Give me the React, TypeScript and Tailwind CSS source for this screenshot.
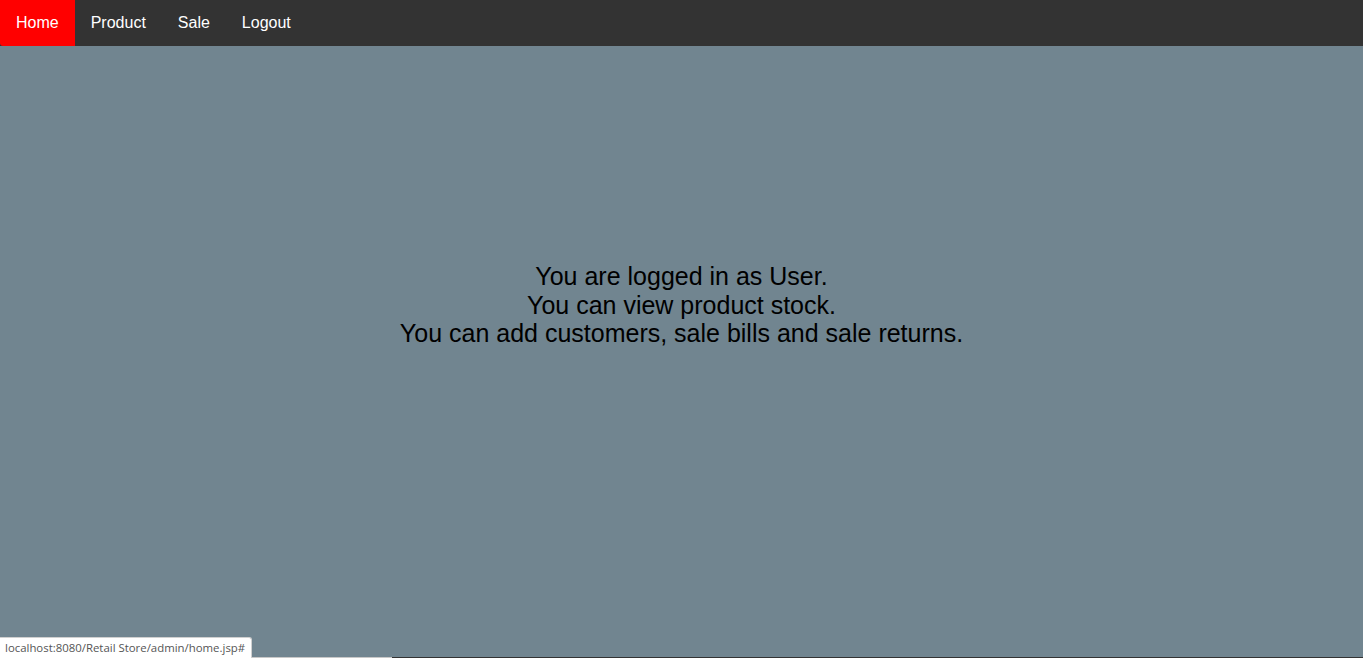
import React from "react";

const links = ["Home", "Product", "Sale", "Logout"];

export default function App() {
  return (
    <div className="relative flex h-[658px] flex-col overflow-hidden bg-[#718590] font-['Liberation_Sans',Arial,sans-serif]">
      {/* Top nav */}
      <nav className="flex h-[46px] shrink-0 bg-[#333333]">
        {links.map((l, i) => (
          <a
            key={l}
            href="#"
            className={
              i === 0
                ? "flex items-center rounded-bl-[3px] bg-[#ff0000] px-4 text-[16px] text-white"
                : "flex items-center px-4 text-[16px] text-white"
            }
          >
            {l}
          </a>
        ))}
      </nav>

      {/* Message */}
      <div className="flex flex-1 justify-center pt-[216px] text-center text-[25px] leading-[28.5px] text-black">
        <p>
          You are logged in as User.
          <br />
          You can view product stock.
          <br />
          You can add customers, sale bills and sale returns.
        </p>
      </div>

      {/* bottom edge */}
      <div className="absolute bottom-0 left-0 flex h-px w-full bg-[#333]">
        <div className="ml-[48px] w-[344px] bg-[#c8c8c8]" />
      </div>

      {/* Browser status bubble */}
      <div className="absolute bottom-0 left-0 flex h-[21px] items-center rounded-tr-[3px] border border-b-0 border-l-0 border-[#d0d0d0] bg-white pl-[5px] pr-[6px] font-['Open_Sans',sans-serif] text-[11.4px] text-[#555]">
        localhost:8080/Retail Store/admin/home.jsp#
      </div>
    </div>
  );
}
